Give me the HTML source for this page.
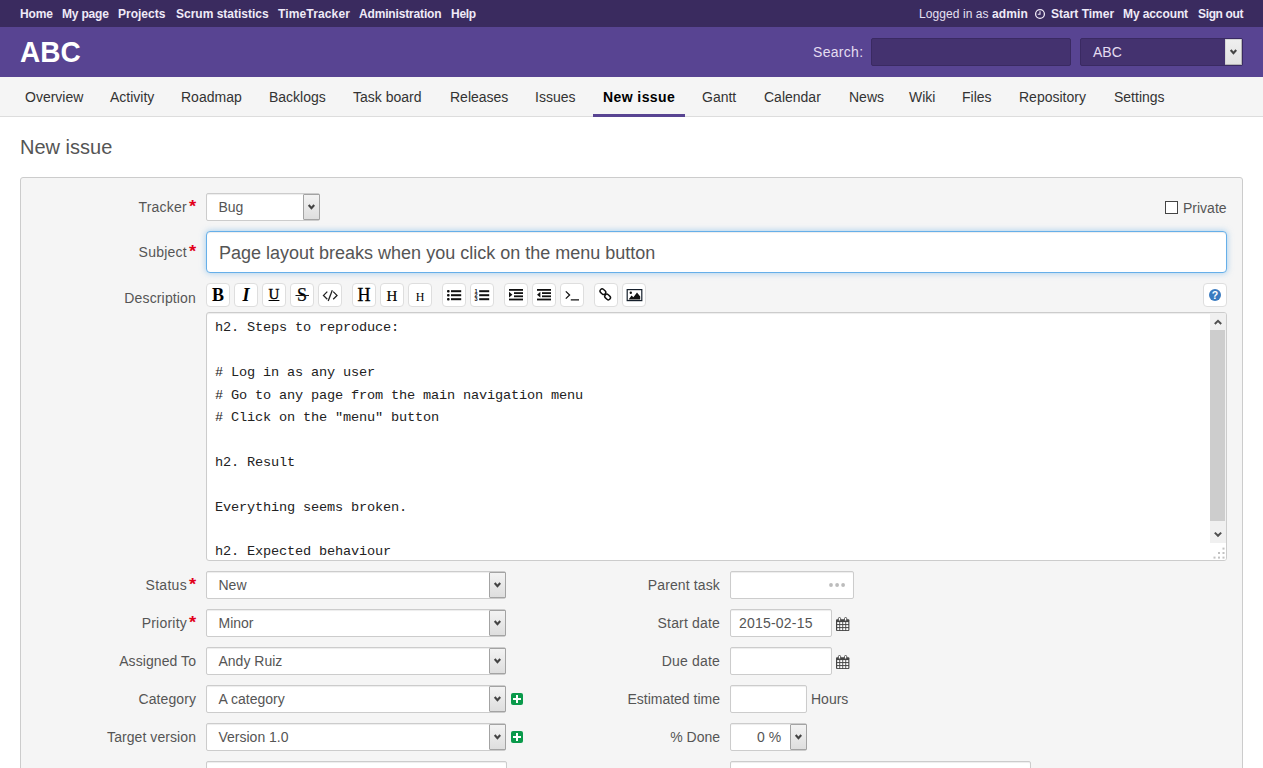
<!DOCTYPE html>
<html lang="en">
<head>
<meta charset="utf-8">
<title>New issue - ABC</title>
<style>
*{box-sizing:border-box;margin:0;padding:0}
html,body{width:1263px;height:768px;overflow:hidden;background:#fff}
body{font-family:"Liberation Sans",Arial,sans-serif;font-size:14px;color:#555;position:relative}
a{text-decoration:none;color:inherit}
#top-menu{position:absolute;left:0;top:0;width:1263px;height:27px;background:#3a2b5f;color:#e6e0f2;font-size:12px;line-height:29px}
#top-menu a{font-weight:bold;color:#efeaf7;position:absolute;top:0;white-space:nowrap}
#top-menu span.t{position:absolute;top:0;white-space:nowrap}
#header{position:absolute;left:0;top:27px;width:1263px;height:50px;background:#584492}
#header h1{transform:scaleY(1.055);transform-origin:0 27px;position:absolute;left:20px;top:9px;font-size:28px;line-height:34px;font-weight:bold;color:#fff}
#header .slabel{letter-spacing:0.3px;position:absolute;left:813px;top:11px;font-size:14px;line-height:28px;color:#e4ddf1}
#header .q{position:absolute;left:871px;top:11px;width:200px;height:28px;background:#44326f;border:1px solid #3a2a62;border-radius:2px}
#header .pj{position:absolute;left:1080px;top:11px;width:163px;height:28px;background:#44326f;border:1px solid #3a2a62;border-radius:2px;color:#e4ddf1;font-size:14px;line-height:27px;padding-left:12px}
#header .pj .arr{position:absolute;right:0;top:0;width:17px;height:26px;background:linear-gradient(#efefef,#e2e2e2);border:1px solid #d6d6d6;border-right-color:#b5b5b5;border-bottom-color:#b5b5b5;border-radius:1px}
#main-menu{position:absolute;left:0;top:77px;width:1263px;height:40px;background:#f5f5f5;border-bottom:1px solid #ddd}
#main-menu a{position:absolute;top:0;height:40px;line-height:40px;font-size:14px;color:#333;white-space:nowrap;padding:0 10px}
#main-menu a.sel{font-weight:bold;color:#000;border-bottom:3px solid #584492;width:92px;letter-spacing:0.42px}
h2.title{position:absolute;left:20px;top:133px;font-size:20px;line-height:28px;font-weight:normal;color:#555}
#box{position:absolute;left:20px;top:177px;width:1223px;height:620px;background:#f5f5f5;border:1px solid #ccc;border-radius:3px}
.lbl{position:absolute;width:176px;left:20px;text-align:right;font-size:14px;line-height:20px;color:#555;white-space:nowrap}
.lbl.req{padding-right:9px}
.lbl b{position:absolute;right:-1px;top:-1px;width:9px;text-align:center;color:#e2001a;font-weight:bold;font-size:16.5px;line-height:20px;transform:scaleX(1.12);letter-spacing:0}
.dd,.inp{position:absolute;background:#fff;border:1px solid #ccc;border-radius:2px;font-size:14px;color:#555;white-space:nowrap;box-shadow:inset 0 1px 1px rgba(0,0,0,.075)}
.dd{height:28px;line-height:26px;padding-left:11.5px}
.dd .arr{position:absolute;right:-1px;top:0;width:17px;height:26px;background:linear-gradient(#f3f3f3,#dedede);border:1px solid #a3a3a3;border-radius:1px}
.arr svg{position:absolute;left:3px;top:9px}

.inp{height:28px;line-height:26px;padding-left:9px}
#subject{position:absolute;left:206px;top:231px;width:1021px;height:42px;background:#fff;border:1px solid #66afe9;border-radius:4px;font-size:18px;line-height:42px;padding-left:12px;color:#555;box-shadow:inset 0 1px 1px rgba(0,0,0,.075),0 0 6px rgba(102,175,233,.6);white-space:nowrap}
.tb{position:absolute;top:283px;width:24px;height:24px;background:#fff;border:1px solid #dedede;border-radius:4px;text-align:center;color:#000;overflow:hidden}
.tb span{position:absolute;left:-1px;width:24px;text-align:center;font-family:"Liberation Serif","Times New Roman",serif;font-weight:bold;white-space:nowrap}
.tb svg{position:absolute;left:-1px;top:-1px}
#ta{position:absolute;left:206px;top:312px;width:1021px;height:249px;background:#fff;border:1px solid #ccc;border-radius:3px;box-shadow:inset 0 1px 1px rgba(0,0,0,.075);overflow:hidden}
#ta pre{position:absolute;left:8px;top:4.3px;font-family:"Liberation Mono","DejaVu Sans Mono",monospace;font-size:13.6px;letter-spacing:-0.16px;line-height:22.4px;color:#222;white-space:pre}
#ta .sb{position:absolute;right:0;top:0;width:16px;height:230px;background:#f0f0f0}
#ta .th{position:absolute;left:0;top:17px;width:15px;height:191px;background:#cdcdcd}
#ta .grip{position:absolute;right:0;bottom:0;width:16px;height:17px;background:#fff}
.plus{position:absolute;width:12px;height:12px;background:#0a9a4b;border-radius:2px}
.plus:before{content:"";position:absolute;left:2px;top:5px;width:8px;height:2px;background:#fff}
.plus:after{content:"";position:absolute;left:5px;top:2px;width:2px;height:8px;background:#fff}
.cal{position:absolute}
.txt{position:absolute;font-size:14px;line-height:20px;color:#555;white-space:nowrap}
</style>
</head>
<body>
<div id="top-menu">
<a style="left:20px;letter-spacing:-0.15px">Home</a><a style="left:62px;letter-spacing:-0.2px">My page</a><a style="left:118px">Projects</a><a style="left:176px">Scrum statistics</a><a style="left:278px;letter-spacing:0.14px">TimeTracker</a><a style="left:359px;letter-spacing:-0.16px">Administration</a><a style="left:451px;letter-spacing:-0.27px">Help</a>
<span class="t" style="left:919px;letter-spacing:0.08px">Logged in as <a style="position:static">admin</a></span>
<svg style="position:absolute;left:1034px;top:8px" width="12" height="12" viewBox="0 0 12 12"><circle cx="6" cy="6" r="4.4" fill="none" stroke="#efeaf7" stroke-width="1.3"/><path d="M6 3.2V6.2H3.8" fill="none" stroke="#efeaf7" stroke-width="1.1"/></svg><a style="left:1051px">Start Timer</a><a style="left:1123px;letter-spacing:-0.1px">My account</a><a style="left:1198px;letter-spacing:-0.35px">Sign out</a>
</div>
<div id="header">
<h1>ABC</h1>
<span class="slabel">Search:</span>
<div class="q"></div>
<div class="pj">ABC<span class="arr"><svg width="9" height="7" viewBox="0 0 9 7"><path d="M1.7 1L4.45 4.2L7.2 1" fill="none" stroke="#444" stroke-width="2.1"/></svg></span></div>
</div>
<div id="main-menu">
<a style="left:15px">Overview</a><a style="left:100px">Activity</a><a style="left:171px">Roadmap</a><a style="left:259px">Backlogs</a><a style="left:343px">Task board</a><a style="left:440px">Releases</a><a style="left:525px">Issues</a><a class="sel" style="left:593px">New issue</a><a style="left:692px">Gantt</a><a style="left:754px">Calendar</a><a style="left:839px">News</a><a style="left:899px">Wiki</a><a style="left:952px">Files</a><a style="left:1009px">Repository</a><a style="left:1104px">Settings</a>
</div>
<h2 class="title">New issue</h2>
<div id="box"></div>
<div class="lbl req" style="left:20px;width:176px;top:197px;letter-spacing:0.23px">Tracker<b>*</b></div>
<div class="dd" style="left:206px;top:193px;width:114px;">Bug<span class="arr"><svg width="9" height="7" viewBox="0 0 9 7"><path d="M1.7 1L4.45 4.2L7.2 1" fill="none" stroke="#444" stroke-width="2.1"/></svg></span></div>
<div style="position:absolute;left:1165px;top:201px;width:13px;height:13px;background:#fff;border:1px solid #444"></div><div class="txt" style="left:1183px;top:198px">Private</div>
<div class="lbl req" style="left:20px;width:176px;top:242px;letter-spacing:0.24px">Subject<b>*</b></div>
<div id="subject">Page layout breaks when you click on the menu button</div>
<div class="lbl" style="left:20px;width:176px;top:288px;letter-spacing:0.15px">Description</div>
<div class="tb" id="tb-B" style="left:206px"><span style="font-size:18px;line-height:20px;top:1px">B</span></div>
<div class="tb" id="tb-I" style="left:234px"><span style="font-size:18px;line-height:20px;top:1px;font-style:italic">I</span></div>
<div class="tb" id="tb-U" style="left:262px"><span style="font-size:15px;line-height:20px;top:0px;font-weight:normal;text-decoration:underline;-webkit-text-stroke:0.35px #000">U</span></div>
<div class="tb" id="tb-S" style="left:290px"><span style="font-size:18px;line-height:20px;top:1px;font-weight:normal;-webkit-text-stroke:0.2px #000">S</span><svg width="24" height="24" viewBox="0 0 24 24"><path d="M5.5 12.5H19" stroke="#1a1a1a" stroke-width="1.2" fill="none"/></svg></div>
<div class="tb" id="tb-code" style="left:318px"><svg width="24" height="24" viewBox="0 0 24 24"><g fill="none" stroke="#222" stroke-width="1.3"><path d="M9.3 8.6L5.5 12.4L9.3 16.2"/><path d="M10.2 18L14.3 7.2"/><path d="M15.2 8.6L19 12.4L15.2 16.2"/></g></svg></div>
<div class="tb" id="tb-H1" style="left:352px"><span style="font-size:18px;line-height:20px;top:1px;font-weight:normal;-webkit-text-stroke:0.3px #000">H</span></div>
<div class="tb" id="tb-H2" style="left:380px"><span style="font-size:15px;line-height:20px;top:2px;font-weight:normal;-webkit-text-stroke:0.2px #000">H</span></div>
<div class="tb" id="tb-H3" style="left:408px"><span style="font-size:12px;line-height:20px;top:3px;font-weight:normal">H</span></div>
<div class="tb" id="tb-ul" style="left:442px"><svg width="24" height="24" viewBox="0 0 24 24"><g fill="#111"><rect x="5" y="7" width="2.6" height="2.4" rx="1"/><rect x="5" y="11" width="2.6" height="2.4" rx="1"/><rect x="5" y="15" width="2.6" height="2.4" rx="1"/><rect x="9" y="7.2" width="10.2" height="2"/><rect x="9" y="11.2" width="10.2" height="2"/><rect x="9" y="15.2" width="10.2" height="2"/></g></svg></div>
<div class="tb" id="tb-ol" style="left:470px"><svg width="24" height="24" viewBox="0 0 24 24"><g fill="#111"><rect x="9.2" y="7.2" width="10" height="2"/><rect x="9.2" y="11.2" width="10" height="2"/><rect x="9.2" y="15.2" width="10" height="2"/></g><g font-family="Liberation Sans, Arial, sans-serif" font-size="5.6" font-weight="bold" fill="#111"><text x="4.6" y="10">1</text><text x="4.6" y="14">2</text><text x="4.6" y="18">3</text></g></svg></div>
<div class="tb" id="tb-in" style="left:504px"><svg width="24" height="24" viewBox="0 0 24 24"><g fill="#111"><rect x="5" y="6" width="14" height="1.8"/><rect x="10" y="9.2" width="9" height="1.8"/><rect x="10" y="12.4" width="9" height="1.8"/><rect x="5" y="15.6" width="14" height="1.8"/><path d="M5 8.8L8.4 11.7L5 14.6z"/></g></svg></div>
<div class="tb" id="tb-out" style="left:532px"><svg width="24" height="24" viewBox="0 0 24 24"><g fill="#111"><rect x="5" y="6" width="14" height="1.8"/><rect x="10" y="9.2" width="9" height="1.8"/><rect x="10" y="12.4" width="9" height="1.8"/><rect x="5" y="15.6" width="14" height="1.8"/><path d="M8.4 8.8L5 11.7L8.4 14.6z"/></g></svg></div>
<div class="tb" id="tb-pre" style="left:560px"><svg width="24" height="24" viewBox="0 0 24 24"><g fill="none" stroke="#111" stroke-width="1.25"><path d="M5.8 8.4L9.6 12L5.8 15.6"/><path d="M10.8 16.9H19"/></g></svg></div>
<div class="tb" id="tb-link" style="left:594px"><svg width="24" height="24" viewBox="0 0 24 24"><g fill="none" stroke="#111" stroke-width="1.45"><rect x="-3.1" y="-2.1" width="6.2" height="4.2" rx="2.1" transform="translate(8.9 8.7) rotate(42)"/><rect x="-3.1" y="-2.1" width="6.2" height="4.2" rx="2.1" transform="translate(13.6 14) rotate(42)"/></g></svg></div>
<div class="tb" id="tb-img" style="left:622px"><svg width="24" height="24" viewBox="0 0 24 24"><rect x="5.2" y="6.6" width="14.6" height="11" fill="#fff" stroke="#16202c" stroke-width="1.2"/><path d="M6.6 16.4L9.6 12.6L11.4 14.2L15 9.6L18.2 13.4V16.4z" fill="#111"/><circle cx="8.8" cy="9.8" r="1.2" fill="#111"/></svg></div>
<div class="tb" id="tb-help" style="left:1203px"><svg width="24" height="24" viewBox="0 0 24 24"><circle cx="12" cy="12" r="6" fill="#3a7bc0"/><text x="12" y="15.6" text-anchor="middle" font-family="Liberation Sans, Arial, sans-serif" font-weight="bold" font-size="10.5" fill="#fff">?</text></svg></div>
<div id="ta"><pre>h2. Steps to reproduce:

# Log in as any user
# Go to any page from the main navigation menu
# Click on the &quot;menu&quot; button

h2. Result

Everything seems broken.

h2. Expected behaviour

Nothing breaks.</pre><div class="sb"><svg style="position:absolute;left:3px;top:5px" width="10" height="8" viewBox="0 0 10 8"><path d="M1.8 6L5 2.8L8.2 6" fill="none" stroke="#505050" stroke-width="2"/></svg><div class="th"></div><svg style="position:absolute;left:3px;top:218px" width="10" height="8" viewBox="0 0 10 8"><path d="M1.8 1.6L5 4.8L8.2 1.6" fill="none" stroke="#505050" stroke-width="2"/></svg></div><div class="grip"><svg width="16" height="17" viewBox="0 0 16 17"><g fill="#c2c2c2"><rect x="12.5" y="4.6" width="2" height="2"/><rect x="8" y="9" width="2" height="2"/><rect x="12.5" y="9" width="2" height="2"/><rect x="3.5" y="13.6" width="2" height="2"/><rect x="8" y="13.6" width="2" height="2"/><rect x="12.5" y="13.6" width="2" height="2"/></g></svg></div></div>
<div class="lbl req" style="left:20px;width:176px;top:575px;letter-spacing:0.3px">Status<b>*</b></div>
<div class="dd" style="left:206px;top:571px;width:300px;">New<span class="arr"><svg width="9" height="7" viewBox="0 0 9 7"><path d="M1.7 1L4.45 4.2L7.2 1" fill="none" stroke="#444" stroke-width="2.1"/></svg></span></div>
<div class="lbl req" style="left:20px;width:176px;top:613px;letter-spacing:0.22px">Priority<b>*</b></div>
<div class="dd" style="left:206px;top:609px;width:300px;">Minor<span class="arr"><svg width="9" height="7" viewBox="0 0 9 7"><path d="M1.7 1L4.45 4.2L7.2 1" fill="none" stroke="#444" stroke-width="2.1"/></svg></span></div>
<div class="lbl" style="left:20px;width:176px;top:651px;letter-spacing:0.07px">Assigned To</div>
<div class="dd" style="left:206px;top:647px;width:300px;">Andy Ruiz<span class="arr"><svg width="9" height="7" viewBox="0 0 9 7"><path d="M1.7 1L4.45 4.2L7.2 1" fill="none" stroke="#444" stroke-width="2.1"/></svg></span></div>
<div class="lbl" style="left:20px;width:176px;top:689px;letter-spacing:0.09px">Category</div>
<div class="dd" style="left:206px;top:685px;width:300px;">A category<span class="arr"><svg width="9" height="7" viewBox="0 0 9 7"><path d="M1.7 1L4.45 4.2L7.2 1" fill="none" stroke="#444" stroke-width="2.1"/></svg></span></div>
<div class="lbl" style="left:20px;width:176px;top:727px;letter-spacing:0.07px">Target version</div>
<div class="dd" style="left:206px;top:723px;width:300px;">Version 1.0<span class="arr"><svg width="9" height="7" viewBox="0 0 9 7"><path d="M1.7 1L4.45 4.2L7.2 1" fill="none" stroke="#444" stroke-width="2.1"/></svg></span></div>
<div class="inp" style="left:206px;top:761px;width:301px;"></div>
<div class="plus" style="left:511px;top:693px"></div><div class="plus" style="left:511px;top:731px"></div>
<div class="lbl" style="left:544px;width:176px;top:575px;letter-spacing:0.13px">Parent task</div>
<div class="inp" style="left:730px;top:571px;width:124px;"></div>
<div class="lbl" style="left:544px;width:176px;top:613px;letter-spacing:0.17px">Start date</div>
<div class="inp" style="left:730px;top:609px;width:102px;padding-left:8px;letter-spacing:0.2px">2015-02-15</div>
<div class="lbl" style="left:544px;width:176px;top:651px;letter-spacing:0.19px">Due date</div>
<div class="inp" style="left:730px;top:647px;width:102px;"></div>
<div class="lbl" style="left:544px;width:176px;top:689px">Estimated time</div>
<div class="inp" style="left:730px;top:685px;width:77px;"></div>
<div class="txt" style="left:811px;top:689px">Hours</div>
<svg class="cal" style="left:836px;top:617px" width="14" height="14" viewBox="0 0 14 14"><rect x="0" y="2.2" width="13.4" height="11.8" rx="1" fill="#444"/><g fill="#fff"><rect x="1.2" y="5.1" width="2.1" height="2"/><rect x="4.2" y="5.1" width="2.1" height="2"/><rect x="7.2" y="5.1" width="2.1" height="2"/><rect x="10.2" y="5.1" width="2.1" height="2"/><rect x="1.2" y="8.1" width="2.1" height="2"/><rect x="4.2" y="8.1" width="2.1" height="2"/><rect x="7.2" y="8.1" width="2.1" height="2"/><rect x="10.2" y="8.1" width="2.1" height="2"/><rect x="1.2" y="11.1" width="2.1" height="2"/><rect x="4.2" y="11.1" width="2.1" height="2"/><rect x="7.2" y="11.1" width="2.1" height="2"/><rect x="10.2" y="11.1" width="2.1" height="2"/></g><g fill="#fff" stroke="#444" stroke-width="0.9"><rect x="2.4" y="0.45" width="2.2" height="3.6" rx="1.1"/><rect x="8.5" y="0.45" width="2.2" height="3.6" rx="1.1"/></g></svg><svg class="cal" style="left:836px;top:655px" width="14" height="14" viewBox="0 0 14 14"><rect x="0" y="2.2" width="13.4" height="11.8" rx="1" fill="#444"/><g fill="#fff"><rect x="1.2" y="5.1" width="2.1" height="2"/><rect x="4.2" y="5.1" width="2.1" height="2"/><rect x="7.2" y="5.1" width="2.1" height="2"/><rect x="10.2" y="5.1" width="2.1" height="2"/><rect x="1.2" y="8.1" width="2.1" height="2"/><rect x="4.2" y="8.1" width="2.1" height="2"/><rect x="7.2" y="8.1" width="2.1" height="2"/><rect x="10.2" y="8.1" width="2.1" height="2"/><rect x="1.2" y="11.1" width="2.1" height="2"/><rect x="4.2" y="11.1" width="2.1" height="2"/><rect x="7.2" y="11.1" width="2.1" height="2"/><rect x="10.2" y="11.1" width="2.1" height="2"/></g><g fill="#fff" stroke="#444" stroke-width="0.9"><rect x="2.4" y="0.45" width="2.2" height="3.6" rx="1.1"/><rect x="8.5" y="0.45" width="2.2" height="3.6" rx="1.1"/></g></svg><svg style="position:absolute;left:828px;top:582px" width="18" height="6" viewBox="0 0 18 6"><g fill="#bcbcbc"><circle cx="3" cy="3" r="1.9"/><circle cx="9.1" cy="3" r="1.9"/><circle cx="15.1" cy="3" r="1.9"/></g></svg>
<div class="lbl" style="left:544px;width:176px;top:727px">% Done</div>
<div class="dd" style="left:730px;top:723px;width:77px;padding-left:26px">0 %<span class="arr"><svg width="9" height="7" viewBox="0 0 9 7"><path d="M1.7 1L4.45 4.2L7.2 1" fill="none" stroke="#444" stroke-width="2.1"/></svg></span></div>
<div class="inp" style="left:730px;top:761px;width:301px;"></div>
</body>
</html>
